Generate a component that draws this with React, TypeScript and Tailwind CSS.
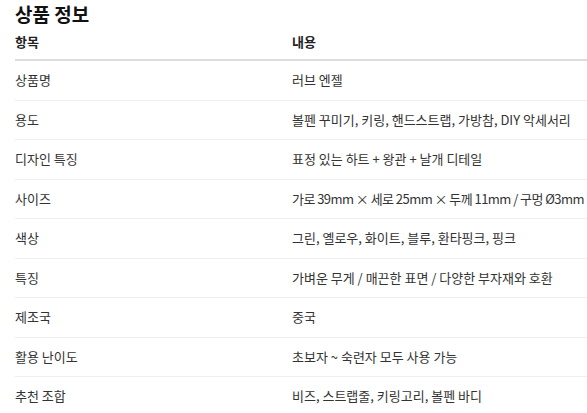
const rows: [string, string, boolean?][] = [
  ["상품명", "러브 엔젤"],
  ["용도", "볼펜 꾸미기, 키링, 핸드스트랩, 가방참, DIY 악세서리"],
  ["디자인 특징", "표정 있는 하트 + 왕관 + 날개 디테일"],
  ["사이즈", "가로 39mm × 세로 25mm × 두께 11mm / 구멍 Ø3mm", true],
  ["색상", "그린, 옐로우, 화이트, 블루, 환타핑크, 핑크"],
  ["특징", "가벼운 무게 / 매끈한 표면 / 다양한 부자재와 호환"],
  ["제조국", "중국"],
  ["활용 난이도", "초보자 ~ 숙련자 모두 사용 가능"],
  ["추천 조합", "비즈, 스트랩줄, 키링고리, 볼펜 바디"],
];

export default function App() {
  return (
    <div
      className="bg-white pl-[15px] text-[#222] overflow-hidden"
      style={{ fontFamily: '"Noto Sans CJK KR", "Noto Sans", sans-serif' }}
    >
      <h2 className="text-[19px] font-bold leading-[28px] text-[#111]">상품 정보</h2>
      <table className="w-[600px] border-collapse text-[13px]">
        <thead>
          <tr className="border-b-2 border-[#ddd]">
            <th className="w-[277px] pt-[5px] pb-[9px] text-left font-bold leading-[17px]">항목</th>
            <th className="pt-[5px] pb-[9px] text-left font-bold leading-[17px]">내용</th>
          </tr>
        </thead>
        <tbody>
          {rows.map(([k, v, tight]) => (
            <tr key={k} className="border-b border-[#eee]">
              <td className="py-[12px] leading-[14.5px] text-[#333]">{k}</td>
              <td
                className={
                  tight
                    ? "py-[12px] leading-[14.5px] text-[#333] whitespace-nowrap tracking-[-0.55px]"
                    : "py-[12px] leading-[14.5px] text-[#333] whitespace-nowrap"
                }
              >
                {v}
              </td>
            </tr>
          ))}
        </tbody>
      </table>
    </div>
  );
}
